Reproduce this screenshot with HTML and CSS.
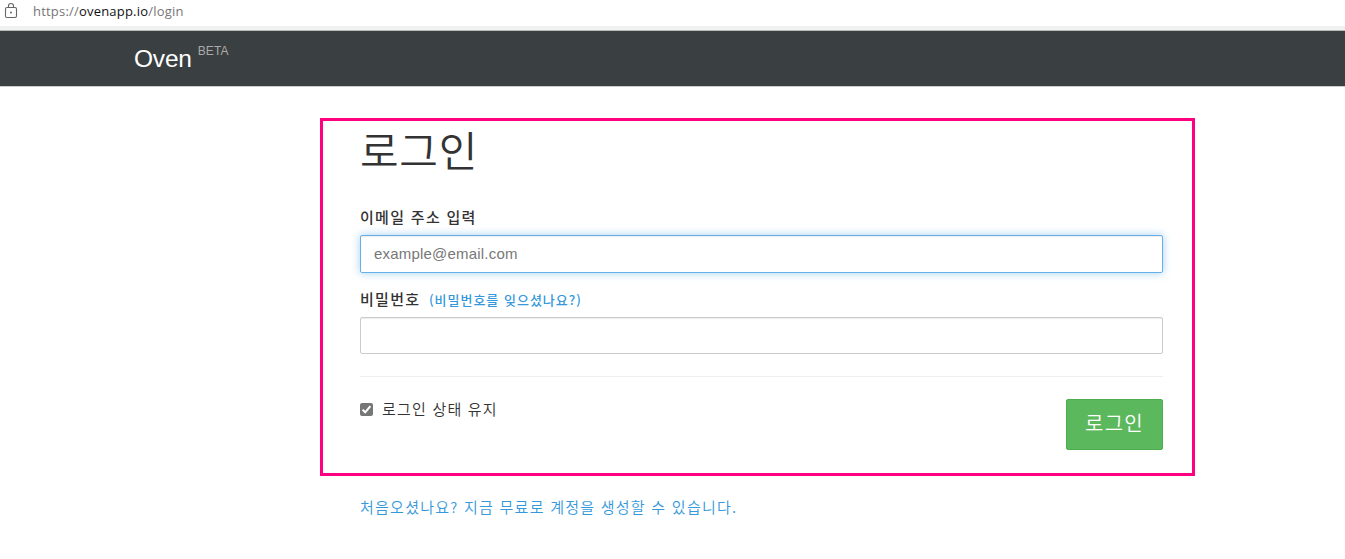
FILE: index.html
```
<!DOCTYPE html>
<html lang="ko">
<head>
    <meta charset="UTF-8">
    <title>로그인 - Oven</title>
    <link rel="stylesheet" href="styles.css">
</head>
<body>
    <div class="address-bar">
        <svg class="lock" width="14" height="18" viewBox="0 0 14 18" fill="none" stroke="#666" stroke-width="1.1">
            <rect x="1.5" y="5.5" width="11" height="10" rx="1.5"/>
            <path d="M4.5 5.5V4a2.5 2.5 0 0 1 5 0v1.5"/>
            <circle cx="7" cy="10.5" r="1" fill="#666" stroke="none"/>
        </svg>
        <span class="url">https://<b>ovenapp.io</b>/login</span>
    </div>
    <nav class="navbar">
        <a href="/" class="brand">Oven</a>
        <span class="beta">BETA</span>
    </nav>

    <div class="login-box">
        <h1>로그인</h1>
        <form id="loginForm">
            <label for="email">이메일 주소 입력</label>
            <input type="email" id="email" name="email" class="focused" placeholder="example@email.com">
            <label for="password" class="password-label">비밀번호 <a href="/forgot" class="forgot">(비밀번호를 잊으셨나요?)</a></label>
            <input type="password" id="password" name="password">
            <hr>
            <div class="actions">
                <label class="remember">
                    <input type="checkbox" name="remember" checked>
                    <svg class="check" width="13" height="13" viewBox="0 0 13 13">
                        <rect width="13" height="13" rx="2" fill="#767676"/>
                        <path d="M2.6 6.7l2.6 2.6 5.2-6.2" fill="none" stroke="#fff" stroke-width="2"/>
                    </svg>
                    <span class="remember-text">로그인 상태 유지</span>
                </label>
                <button type="submit">로그인</button>
            </div>
        </form>
    </div>
    <p class="signup"><a href="/signup">처음오셨나요? 지금 무료로 계정을 생성할 수 있습니다.</a></p>
</body>
</html>
```
FILE: styles.css
```
* { box-sizing: border-box; }
body {
    margin: 0;
    font-family: "Liberation Sans", "Noto Sans CJK KR", sans-serif;
    font-size: 15px;
    color: #333;
    background-color: #fff;
}
a { color: #3498db; text-decoration: none; }
.address-bar {
    display: flex; align-items: flex-start;
    height: 30px; padding: 2px 4px 0;
    border-bottom: 4px solid #f1f1f1;
}
.lock { margin-right: 15px; }
.url {
    font-family: "Open Sans", "Noto Sans", sans-serif;
    font-size: 13px; line-height: 18px; letter-spacing: 0.2px;
    color: #767676;
}
.url b { font-weight: normal; color: #111; }
.navbar {
    display: flex;
    height: 57px; padding-left: 134px;
    background-color: #3a3f41;
    border-top: 1px solid #bbb;
    border-bottom: 1px solid #ccc;
}
.brand { font-size: 24.5px; line-height: 56px; letter-spacing: -0.2px; color: #fff; }
.beta { margin: 13px 0 0 6px; font-size: 12px; line-height: 14px; letter-spacing: 0.1px; color: #aaa; }
.login-box {
    width: 875px; height: 358px;
    margin: 31px 0 0 320px;
    padding: 0 29px 0 37px;
    border: 3px solid #ff0080;
}
h1 {
    margin: 0; height: 85px;
    font-family: "Noto Sans CJK KR", sans-serif;
    font-size: 42px; line-height: 55px; font-weight: 350;
    letter-spacing: 0.7px;
}
label {
    display: block; height: 29px;
    font-family: "Noto Sans CJK KR", sans-serif;
    font-size: 15px; line-height: 22px; font-weight: 500;
    letter-spacing: 1.3px;
}
input[type="email"], input[type="password"] {
    display: block;
    width: 100%; height: 38px; padding: 0 13px 2px;
    font-family: "Liberation Sans", sans-serif; font-size: 15px;
    letter-spacing: 0.2px;
    border: 1px solid #ccc;
    border-radius: 2px;
    box-shadow: inset 0 1px 1px rgba(0,0,0,0.075);
    outline: none;
}
input::placeholder { color: #777; }
input.focused {
    border-color: #66afe9;
    box-shadow: inset 0 1px 1px rgba(0,0,0,0.075), 0 0 8px rgba(102,175,233,0.6);
}
.password-label { margin-top: 15px; }
input[type="password"] { height: 37px; }
.forgot { margin-left: 3px; font-size: 13px; letter-spacing: 1px; }
hr { margin: 22px 0; border: none; border-top: 1px solid #eee; }
.actions { display: flex; justify-content: space-between; }
.remember { display: flex; font-weight: 350; letter-spacing: 1.2px; }
.remember input { display: none; }
.check { margin-top: 4px; }
.remember-text { margin-left: 9px; line-height: 19px; }
button {
    width: 97px; height: 51px; padding: 0 0 4px;
    font-family: "Noto Sans CJK KR", sans-serif;
    font-size: 20px; font-weight: 350; letter-spacing: 1.3px;
    color: #fff;
    background-color: #5cb85c;
    border: 1px solid #4cae4c;
    border-radius: 2px;
}
.signup {
    margin: 19px 0 0 360px;
    font-family: "Noto Sans CJK KR", sans-serif;
    font-weight: 350; line-height: 24px; letter-spacing: 1.25px;
}
```
